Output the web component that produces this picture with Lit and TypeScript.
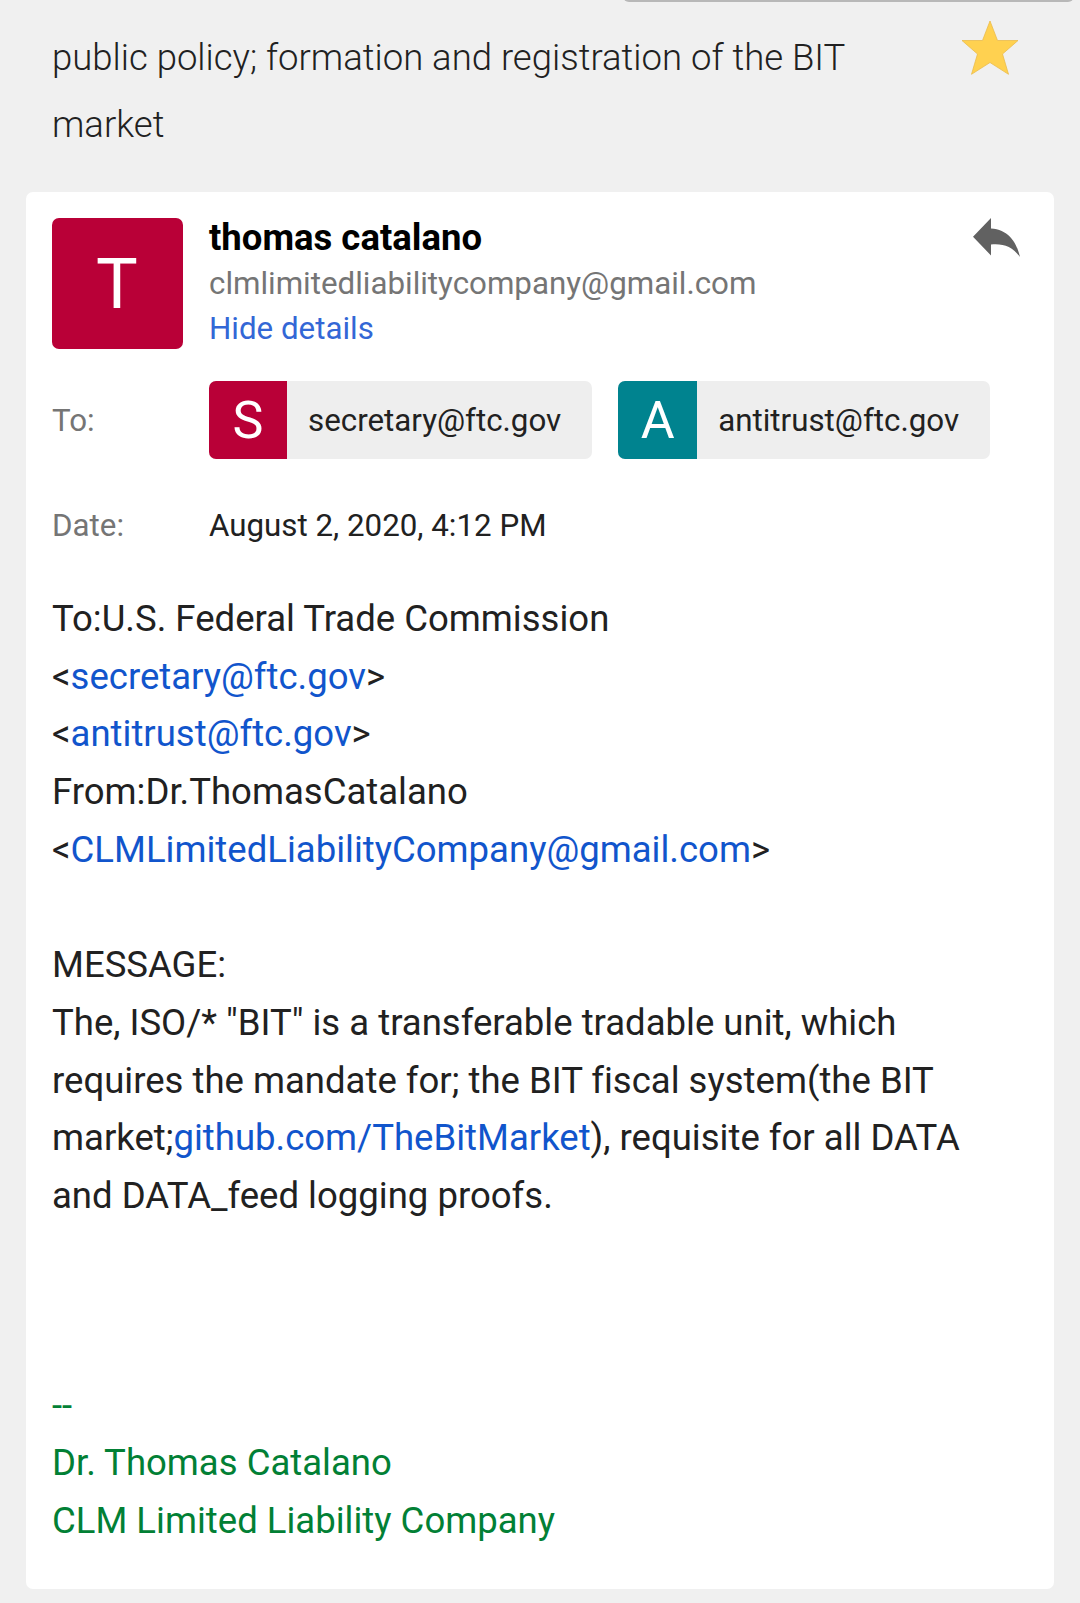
import { LitElement, html, css } from "lit";
import { customElement } from "lit/decorators.js";

@customElement("app-root")
export class AppRoot extends LitElement {
  static styles = css`
    :host { display: block; font-family: Roboto, sans-serif; color: #212121; }
    * { box-sizing: border-box; }
    .page { height: 1603px; background: #f0f0f0; padding: 0 26px; overflow: hidden; position: relative; font-variant-ligatures: none; }
    .scroll { position: absolute; right: 6px; top: -10px; width: 451px; height: 12px; border-radius: 8px; background: #b8b8b8; }
    .subject { height: 192px; padding: 24px 26px 0; display: flex; justify-content: space-between; }
    h1 { margin: 0; font-weight: 300; font-size: 36.5px; line-height: 67px; width: 850px; }
    .star { width: 58px; height: 56px; margin: -4px 9.5px 0 0; filter: blur(0.5px); }
    .card { background: #fff; border-radius: 7px; height: 1397px; padding: 26px; }
    .head { display: flex; height: 131px; }
    .avatar { width: 131px; height: 131px; border-radius: 7px; background: #b90037; color: #fff; font-size: 70px; line-height: 133px; text-align: center; padding-right: 1px; }
    .who { margin: -2px 0 0 26px; flex: 1; font-size: 31.3px; line-height: 45px; }
    .name { font-weight: 700; font-size: 36.5px; color: #000; line-height: 43px; margin-bottom: 2px; }
    .mail { color: #757575; }
    .hide { color: #3367d6; }
    .reply { width: 50px; height: 44px; margin: 0 6px 0 0; filter: blur(0.6px); }
    .row { display: flex; font-size: 31.3px; align-items: center; }
    .label { width: 157px; color: #757575; }
    .to { height: 78px; margin-top: 32px; }
    .date { height: 40px; margin-top: 46px; }
    .chip { display: flex; height: 78px; border-radius: 7px; overflow: hidden; background: #eee; margin-right: 26px; line-height: 80px; }
    .letter { width: 78px; color: #fff; font-size: 52px; text-align: center; }
    .red { background: #b90037; }
    .teal { background: #00838f; width: 79px; }
    .addr { padding: 0 31px 0 21px; }
    .body { margin-top: 45px; font-size: 36.52px; line-height: 57.7px; white-space: nowrap; }
    .link { color: #1155cc; }
    .sig { margin-top: 152px; color: #028035; }
  `;
  render() {
    return html`<div class="page">
      <div class="scroll"></div>
      <header class="subject"><h1>public policy; formation and registration of the BIT market</h1>
        <svg class="star" viewBox="960 20 58 56"><path d="M989 21L996.5 40.5H1017L1001.5 54L1007.5 74.3L989 62.5L970.5 74.3L976.5 54L961 40.5H981.5Z" fill="#ffd150" stroke="#eabb4b" stroke-width=".8"/></svg>
      </header>
      <main class="card">
        <div class="head"><div class="avatar">T</div>
          <div class="who"><div class="name">thomas catalano</div><div class="mail">clmlimitedliabilitycompany@gmail.com</div><div class="hide">Hide details</div></div>
          <svg class="reply" viewBox="972 218 50 44"><path d="M991 218L973 236.7L991 255.5V244.5C1003 243.5 1012 246 1020 257C1016 240 1007 229.5 991 228.5Z" fill="#616161"/></svg>
        </div>
        <div class="row to"><div class="label">To:</div>
          <div class="chip"><span class="letter red">S</span><span class="addr">secretary@ftc.gov</span></div>
          <div class="chip"><span class="letter teal">A</span><span class="addr">antitrust@ftc.gov</span></div></div>
        <div class="row date"><div class="label">Date:</div><div>August 2, 2020, 4:12 PM</div></div>
        <div class="body">
          <div>To:U.S. Federal Trade Commission</div>
          <div>&lt;<span class="link">secretary@ftc.gov</span>&gt;</div>
          <div>&lt;<span class="link">antitrust@ftc.gov</span>&gt;</div>
          <div>From:Dr.ThomasCatalano</div>
          <div>&lt;<span class="link">CLMLimitedLiabilityCompany@gmail.com</span>&gt;</div>
          <br>
          <div>MESSAGE:</div>
          <div>The, ISO/* "BIT" is a transferable tradable unit, which</div>
          <div>requires the mandate for; the BIT fiscal system(the BIT</div>
          <div>market;<span class="link">github.com/TheBitMarket</span>), requisite for all DATA</div>
          <div>and DATA_feed logging proofs.</div>
          <div class="sig"><div>--</div><div>Dr. Thomas Catalano</div><div>CLM Limited Liability Company</div></div>
        </div>
      </main></div>`;
  }
}
